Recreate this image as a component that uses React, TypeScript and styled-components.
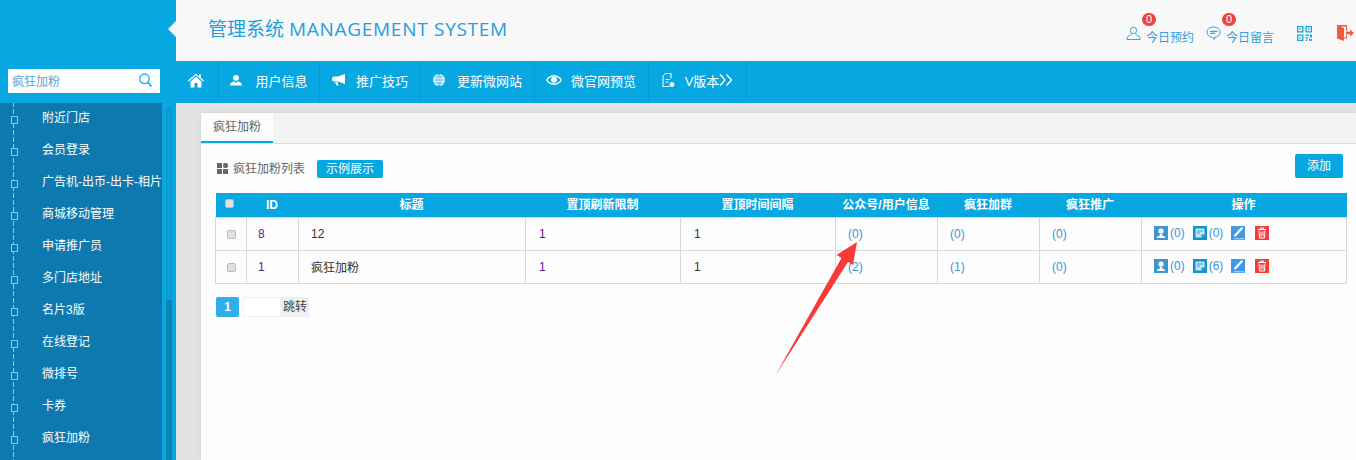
import React from "react";
import styled, { createGlobalStyle } from "styled-components";

const Global = createGlobalStyle`
  html, body { margin: 0; padding: 0; height: 460px; overflow: hidden; background: #e2e2e2; }
  body { font-family: "Liberation Sans", "Noto Sans CJK SC", sans-serif; font-size: 12px; color: #333; }
  * { box-sizing: border-box; }
`;
const Page = styled.div`position: relative; width: 1356px; height: 460px; overflow: hidden; display: flex; flex-direction: column;`;
const Header = styled.header`height: 61px; display: flex; background: #f8f8f8; flex: none;`;
const Logo = styled.div`
  position: relative; width: 176px; background: #07a7e1;
  &::after { content: ""; position: absolute; right: 0; top: 21px; border: 8px solid transparent; border-right-color: #f8f8f8; border-left-width: 0; }
`;
const Brand = styled.h1`margin: 0; padding: 16px 0 0 32px; font: 400 19px/26px "Open Sans", "Noto Sans CJK SC", sans-serif; color: #219fe0; flex: 1; white-space: nowrap;`;
const Latin = styled.span`letter-spacing: .72px;`;
const Tools = styled.div`display: flex; align-items: flex-start;`;
const Tool = styled.div<{ $w: number }>`position: relative; width: ${p => p.$w}px; height: 61px; padding-top: 26px; display: flex; gap: 5px; color: #2f9fe0; font-size: 12px; line-height: 22px; white-space: nowrap;
  & > span { margin-top: 1px; }
`;
const Badge = styled.b`position: absolute; top: 13px; left: 16px; width: 14px; height: 13px; border-radius: 7px; background: #e8453c; color: #fff; font: 400 11px/13px "Liberation Sans", sans-serif; text-align: center;`;
const NavRow = styled.div`height: 42px; display: flex; background: #07a7e1; flex: none;`;
const SearchCell = styled.div`width: 176px; padding: 8px 16px 0 8px; flex: none;`;
const SearchBox = styled.div`height: 24px; background: #fff; display: flex; align-items: center; justify-content: space-between; padding: 0 8px 2px 4px; color: #5aa5d8; font-size: 12px;`;
const Nav = styled.nav`display: flex; height: 40px;`;
const NavItem = styled.div<{ $w: number; $gap?: number; $shift?: number }>`width: ${p => p.$w}px; border-right: 1px solid #0a96d2; color: #fff; font-size: 13px; display: flex; align-items: center; justify-content: center; gap: ${p => p.$gap ?? 12}px; padding: 0 ${p => p.$shift ?? 0}px 2px 0; white-space: nowrap;`;
const Body = styled.div`flex: 1; display: flex; min-height: 0;`;
const Side = styled.aside`width: 162px; background: #0e79ae; overflow: hidden; flex: none;`;
const SideList = styled.ul`list-style: none; margin: -1px 0 0 13px; padding: 0; height: 400px;
  background: repeating-linear-gradient(to bottom, #8fc8e4 0 5px, transparent 5px 7px) left top / 1px 100% no-repeat;
`;
const SideItem = styled.li`position: relative; height: 32px; padding-left: 29px; color: #fff; font-size: 12px; line-height: 32px; white-space: nowrap;
  &::before { content: ""; position: absolute; left: -2px; top: 14px; width: 5px; height: 6px; border: 1px solid #8fc8e4; background: #0e79ae; }
`;
const Scroll = styled.div`width: 14px; background: #07a7e1; padding: 4px 4px 0; flex: none;`;
const Track = styled.div`height: 100%; border-radius: 3px 3px 0 0; background: #08a0d8; box-shadow: inset 0 0 0 1px #0a93cb; position: relative; overflow: hidden;
  &::after { content: ""; position: absolute; left: 0; right: 0; top: 193px; bottom: 0; background: #0b83b6; }
`;
const Main = styled.main`flex: 1; padding: 10px 0 0 25px; min-width: 0;`;
const Panel = styled.section`background: #fdfdfd; height: 100%; box-shadow: 0 0 4px rgba(0,0,0,.08);`;
const TabBar = styled.div`height: 31px; background: #f3f3f3; border-bottom: 1px solid #ddd;`;
const Tab = styled.div`width: 72px; height: 30px; background: #fdfdfd; border-bottom: 2px solid #07a7e1; color: #666; text-align: center; line-height: 28px; font-size: 12px;`;
const PanelBody = styled.div`padding: 10px 9px 0 14px;`;
const ListHead = styled.div`height: 39px; display: flex; align-items: flex-start; padding: 6px 0 0 2px; color: #666; font-size: 12px; line-height: 18px; gap: 5px;`;
const Demo = styled.span`margin-left: 7px; width: 66px; height: 18px; background: #07a7e1; color: #fff; border-radius: 2px; text-align: center; line-height: 18px; font-size: 12px;`;
const Add = styled.span`margin: -6px 4px 0 auto; width: 48px; height: 24px; background: #07a7e1; color: #fff; border-radius: 2px; text-align: center; line-height: 24px; font-size: 12px;`;
const Table = styled.table`width: 1132px; table-layout: fixed; border-collapse: collapse;`;
const Th = styled.th<{ $w?: number }>`width: ${p => p.$w ? p.$w + "px" : "auto"}; height: 24px; padding: 0 1px 0 0; background: #07a7e1; color: #fff; font-size: 12px; font-weight: 700; text-align: center; line-height: 20px; vertical-align: middle;`;
const Td = styled.td<{ $center?: boolean; $pad?: number }>`height: 33px; border: 1px solid #d8d8d8; padding: 0 0 0 ${p => p.$pad ?? 12}px; font-size: 12px; color: #333; text-align: ${p => p.$center ? "center" : "left"}; white-space: nowrap;`;
const Visited = styled.span`color: #60139c;`;
const Link = styled.span`color: #3c96d8;`;
const Box = styled.span<{ $head?: boolean }>`display: inline-block; width: 9px; height: 9px; border-radius: 2px; vertical-align: middle; background: #e0e0e0; border: 1px solid #bbb; margin: ${p => p.$head ? "-5px 2px 0 0" : "0"};`;
const Ops = styled.div`display: flex; align-items: center; color: #3c96d8; margin-top: -2px;`;
const OpCount = styled.span`margin: 0 8px 0 2px;`;
const OpIcon = styled.svg<{ $gap?: number }>`display: block; flex: none; margin-right: ${p => p.$gap ?? 0}px;`;
const Pager = styled.div`display: flex; margin-top: 13px; height: 20px; align-items: stretch; padding-left: 1px;`;
const PageNo = styled.span`width: 23px; background: #2eaeea; color: #fff; border-radius: 2px; text-align: center; line-height: 20px; font-size: 12px; font-weight: 700;`;
const PageInput = styled.span`width: 38px; margin-left: 4px; background: #fff; border: 1px solid #f0f0f0;`;
const Jump = styled.span`width: 28px; background: #f0f0f0; color: #444; text-align: center; line-height: 20px; font-size: 12px;`;
const Arrow = styled.svg`position: absolute; left: 0; top: 0; pointer-events: none;`;
const Glyph = styled.svg<{ $top?: number; $left?: number }>`display: block; flex: none; margin: ${p => p.$top ?? 0}px 0 0 ${p => p.$left ?? 0}px;`;

const UserOutline = () => <Glyph width="15" height="15" viewBox="0 0 15 15" fill="none" stroke="#2ea7e0" strokeWidth="1"><circle cx="7.5" cy="4.5" r="3.2" /><path d="M5.5 7.5c0 2-4.500 2-4.500 4.500v1.500h13V12c0-2.500-4.500-2.500-4.500-4.500" /></Glyph>;
const Chat = () => <Glyph width="15" height="15" viewBox="0 0 15 15"><path d="M7.500 1C3.700 1 1 3.200 1 6.200c0 2.500 2 4.400 4.700 5l2.800 2.300-.3-2.100c3.400-.2 5.800-2.300 5.800-5.200C14 3.200 11.300 1 7.500 1z" fill="none" stroke="#2ea7e0" /><path d="M4 4.800h7.500v1.300H4zM4 6.800h5v1.200H4z" fill="#2ea7e0" /></Glyph>;
const Qr = () => <Glyph width="15" height="15" viewBox="0 0 15 15" fill="#19a7e0"><path fillRule="evenodd" d="M0 0h6.500v6.500H0zM1.300 1.300v3.900h3.900V1.300zM8.500 0H15v6.500H8.500zM9.800 1.300v3.900h3.900V1.300zM0 8.500h6.500V15H0zM1.300 9.800v3.900h3.900V9.800z" /><path d="M2.500 2.500h1.500V4H2.500zM11 2.500h1.500V4H11zM2.500 11H4v1.500H2.500zM8.500 8.500H12v1.500H8.500zM13 8.500h2v3h-2zM8.500 11H11v1.500H8.500zM8.500 13.500H10V15H8.500zM12 12.500h1.500V15H12zM14 13h1v2h-1z" /></Glyph>;
const Exit = () => <Glyph $top={-1} width="17" height="16" viewBox="0 0 17 16" fill="#ef5a44"><path d="M0 0h10v6H9V1.500H3.500L7 3v13l-7-2.500z" /><path d="M7 12.500h2V10h1v3.500H7z" /><path d="M9 6.800h4V4.500L17 8l-4 3.500V9.200H9z" /></Glyph>;
const Search = () => <Glyph width="13" height="14" viewBox="0 0 13 14" fill="none" stroke="#22aee6" strokeWidth="1.300"><circle cx="5.500" cy="5.800" r="4.800" /><path d="M9 9.500l3.500 4" strokeWidth="1.800" /></Glyph>;
const Home = () => <Glyph $left={-2} width="16" height="15" viewBox="0 0 16 15" fill="#fff"><path d="M8 .5L0 7.500l.8.900L8 2.300l7.200 6.100.8-.900-3-2.600V1.500h-2v2z" /><path d="M2.500 8.500L8 3.800l5.500 4.700V14.500H9.500V10h-3v4.500H2.500z" /></Glyph>;
const Person = () => <Glyph width="12" height="12" viewBox="0 0 12 12" fill="#fff"><circle cx="6" cy="3.800" r="2.900" /><path d="M0 11.500c0-2.800 2.500-3.700 4.200-4.200L6 9l1.800-1.700c1.700.5 4.200 1.400 4.200 4.200z" /></Glyph>;
const Horn = () => <Glyph width="13" height="12" viewBox="0 0 13 12" fill="#fff"><path d="M13 0v10L6 7.500H2.500a2 2 0 010-5H6z" /><path d="M3 8h2.500l1 3.500H4.500z" /></Glyph>;
const Globe = () => <Glyph width="12" height="12" viewBox="0 0 12 12"><circle cx="6" cy="6" r="6" fill="#fff" /><path d="M6 0v12M0 6h12M1 3h10M1 9h10M6 0C2.800 3 2.800 9 6 12M6 0c3.200 3 3.200 9 0 12" stroke="#07a7e1" strokeWidth=".6" fill="none" /></Glyph>;
const Eye = () => <Glyph width="16" height="10" viewBox="0 0 16 10" fill="#fff"><path fillRule="evenodd" d="M8 0c3.500 0 6.500 2.200 8 5-1.500 2.800-4.500 5-8 5s-6.500-2.200-8-5c1.500-2.800 4.500-5 8-5zM1.500 5C2.800 7 5 8.600 8 8.600S13.200 7 14.500 5C13.200 3 11 1.400 8 1.400S2.800 3 1.500 5z" /><circle cx="8" cy="4.800" r="3" /></Glyph>;
const Doc = () => <Glyph width="13" height="15" viewBox="0 0 13 15" fill="none" stroke="#fff" strokeWidth="1"><path d="M3.500.5h5.500v5M3.500.5L1 3v10.500h6.500" /><path d="M3.500 6.500h4M3.500 9h3" /><circle cx="10" cy="11.500" r="2" fill="#fff" /></Glyph>;
const Chev = () => <Glyph $left={-10} width="14" height="12" viewBox="0 0 14 12" fill="none" stroke="#fff" strokeWidth="1.400"><path d="M1 .5l5 5.500-5 5.500M7.500.5l5 5.500-5 5.500" /></Glyph>;
const Grid4 = () => <Glyph $top={3} width="11" height="11" viewBox="0 0 11 11" fill="#666"><rect width="5" height="5" /><rect x="6" y="0" width="5" height="5" rx="2" /><rect y="6" width="5" height="5" /><rect x="6" y="6" width="5" height="5" /></Glyph>;

const OpUser = () => <OpIcon width="14" height="14" viewBox="0 0 14 14"><rect width="14" height="14" fill="#3f94d3" /><circle cx="7" cy="5" r="2.600" fill="#fff" /><path d="M6 7.500h2l.3 2 2.700 1.300V12H3v-1.200l2.700-1.300z" fill="#fff" /></OpIcon>;
const OpNote = () => <OpIcon width="14" height="14" viewBox="0 0 14 14"><rect width="14" height="14" fill="#1393c9" /><path d="M2.500 2.500h9v6l-3 3h-6z" fill="#bfe6f5" /><path d="M4 5h6M4 7h3" stroke="#1393c9" strokeWidth=".8" /><path d="M8.500 11.500v-3h3" fill="#1393c9" /></OpIcon>;
const OpEdit = () => <OpIcon $gap={10} width="14" height="14" viewBox="0 0 14 14"><rect width="14" height="14" fill="#3d9ae6" /><path d="M10.500 1l1.800 1.300-6.800 7.500L3 11l.5-2.400z" fill="#fff" /><path d="M3 12.800h10" stroke="#bfe0f7" /></OpIcon>;
const OpDel = () => <OpIcon width="14" height="14" viewBox="0 0 14 14"><rect width="14" height="14" fill="#f53a3a" /><path d="M3 3.500h8M5.500 3.500V2h3v1.500M4 4.500l.5 7.500h5l.5-7.500M6 5.500v5M8 5.500v5" stroke="#fff" fill="none" /></OpIcon>;

const menu = ["附近门店", "会员登录", "广告机-出币-出卡-相片", "商城移动管理", "申请推广员", "多门店地址", "名片3版", "在线登记", "微排号", "卡券", "疯狂加粉"];
const rows = [
  { id: "8", title: "12", a: "(0)", b: "(0)", c: "(0)", o1: "(0)", o2: "(0)" },
  { id: "1", title: "疯狂加粉", a: "(2)", b: "(1)", c: "(0)", o1: "(0)", o2: "(6)" },
];

export default function App() {
  return (
    <Page>
      <Global />
      <Header>
        <Logo />
        <Brand>管理系统 <Latin>MANAGEMENT SYSTEM</Latin></Brand>
        <Tools>
          <Tool $w={80}><UserOutline /><span>今日预约</span><Badge>0</Badge></Tool>
          <Tool $w={91}><Chat /><span>今日留言</span><Badge>0</Badge></Tool>
          <Tool $w={40}><Qr /></Tool>
          <Tool $w={19}><Exit /></Tool>
        </Tools>
      </Header>
      <NavRow>
        <SearchCell><SearchBox>疯狂加粉<Search /></SearchBox></SearchCell>
        <Nav>
          <NavItem $w={43}><Home /></NavItem>
          <NavItem $w={101} $gap={13}><Person />用户信息</NavItem>
          <NavItem $w={101} $gap={11}><Horn />推广技巧</NavItem>
          <NavItem $w={114} $gap={12}><Globe />更新微网站</NavItem>
          <NavItem $w={114} $gap={9} $shift={1}><Eye />微官网预览</NavItem>
          <NavItem $w={98} $gap={10}><Doc /><span>V版本</span><Chev /></NavItem>
        </Nav>
      </NavRow>
      <Body>
        <Side>
          <SideList>{menu.map(m => <SideItem key={m}>{m}</SideItem>)}</SideList>
        </Side>
        <Scroll><Track /></Scroll>
        <Main>
          <Panel>
            <TabBar><Tab>疯狂加粉</Tab></TabBar>
            <PanelBody>
              <ListHead><Grid4 />疯狂加粉列表<Demo>示例展示</Demo><Add>添加</Add></ListHead>
              <Table>
                <thead>
                  <tr>
                    <Th $w={31}><Box $head /></Th>
                    <Th $w={52}>ID</Th>
                    <Th $w={227}>标题</Th>
                    <Th $w={155}>置顶刷新限制</Th>
                    <Th $w={155}>置顶时间间隔</Th>
                    <Th $w={102}>公众号/用户信息</Th>
                    <Th $w={102}>疯狂加群</Th>
                    <Th $w={102}>疯狂推广</Th>
                    <Th>操作</Th>
                  </tr>
                </thead>
                <tbody>
                  {rows.map(r => (
                    <tr key={r.id}>
                      <Td $center $pad={0}><Box /></Td>
                      <Td $pad={11}><Visited>{r.id}</Visited></Td>
                      <Td><span>{r.title}</span></Td>
                      <Td $pad={13}><Visited>1</Visited></Td>
                      <Td $pad={13}>1</Td>
                      <Td><Link>{r.a}</Link></Td>
                      <Td><Link>{r.b}</Link></Td>
                      <Td><Link>{r.c}</Link></Td>
                      <Td>
                        <Ops>
                          <OpUser /><OpCount>{r.o1}</OpCount>
                          <OpNote /><OpCount>{r.o2}</OpCount>
                          <OpEdit /><OpDel />
                        </Ops>
                      </Td>
                    </tr>
                  ))}
                </tbody>
              </Table>
              <Pager><PageNo>1</PageNo><PageInput /><Jump>跳转</Jump></Pager>
            </PanelBody>
          </Panel>
        </Main>
      </Body>
      <Arrow width="1356" height="460" viewBox="0 0 1356 460"><path d="M775 376L841.500 258 836.500 255 857 242 853 265 848 262z" fill="#f93a3a" /></Arrow>
    </Page>
  );
}
